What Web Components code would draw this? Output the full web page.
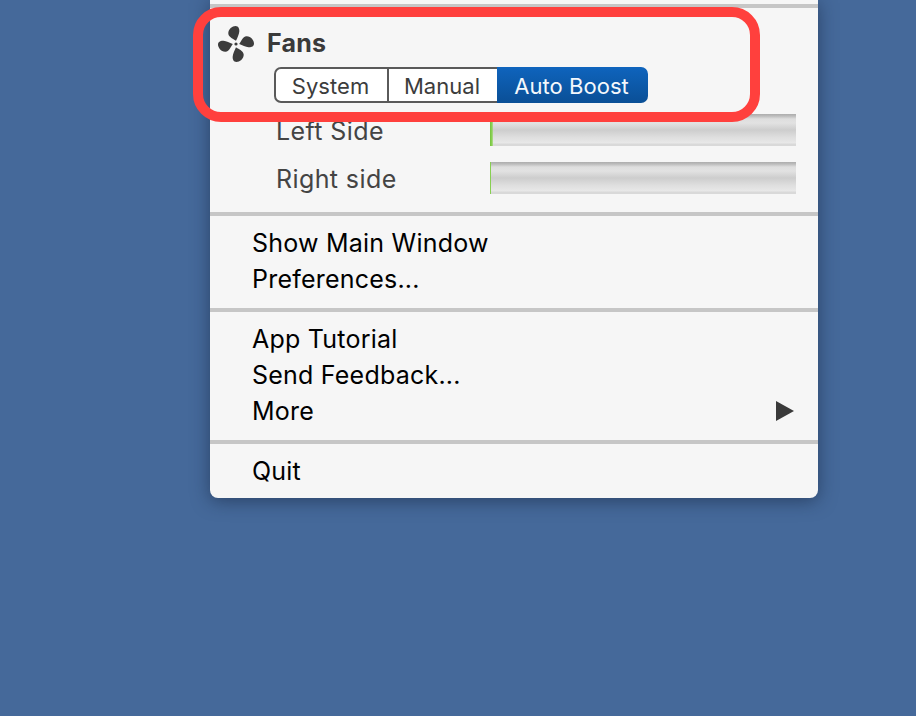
<!DOCTYPE html>
<html>
<head>
<meta charset="utf-8">
<title>Fans</title>
<style>
    html, body { margin: 0; height: 100%; }
    body {
        background: #45699a;
        font-family: Inter, "Liberation Sans", sans-serif;
        overflow: hidden;
    }
</style>
</head>
<body>
<fan-menu>
    <menu-sep></menu-sep>
    <fan-section>
        <fan-row label="Left Side" level="3"></fan-row>
        <fan-row label="Right side" level="1"></fan-row>
    </fan-section>
    <menu-sep></menu-sep>
    <menu-group>
        <menu-item>Show Main Window</menu-item>
        <menu-item>Preferences...</menu-item>
    </menu-group>
    <menu-sep></menu-sep>
    <menu-group>
        <menu-item>App Tutorial</menu-item>
        <menu-item>Send Feedback...</menu-item>
        <menu-item submenu>More</menu-item>
    </menu-group>
    <menu-sep></menu-sep>
    <menu-group last>
        <menu-item>Quit</menu-item>
    </menu-group>
</fan-menu>
<call-out></call-out>

<script>
class FanMenu extends HTMLElement {
    constructor() {
        super();
        this.attachShadow({ mode: 'open' });
        this.shadowRoot.innerHTML = `
            <style>
                :host {
                    display: block;
                    width: 608px;
                    margin-left: 210px;
                    padding-top: 4px;
                    background: #f6f6f6;
                    border-radius: 0 0 8px 8px;
                    box-shadow: 0 3px 18px rgba(20, 35, 60, 0.55);
                }
            </style>
            <slot></slot>
        `
    }
}

class MenuSep extends HTMLElement {
    constructor() {
        super();
        this.attachShadow({ mode: 'open' });
        this.shadowRoot.innerHTML = `
            <style>
                :host { display: block; height: 4px; background: #c6c6c6; }
            </style>
        `
    }
}

class MenuGroup extends HTMLElement {
    constructor() {
        super();
        this.attachShadow({ mode: 'open' });
        this.shadowRoot.innerHTML = `
            <style>
                :host { display: block; padding: 9px 0 11px; }
                :host([last]) { padding: 9px 0 9px; }
            </style>
            <slot></slot>
        `
    }
}

class MenuItem extends HTMLElement {
    constructor() {
        super();
        this.attachShadow({ mode: 'open' });
        this.shadowRoot.innerHTML = `
            <style>
                :host {
                    display: flex;
                    align-items: center;
                    justify-content: space-between;
                    height: 36px;
                    padding: 0 24px 0 42px;
                    font-size: 25px;
                    letter-spacing: 0.22px;
                    color: #000;
                }
                svg { display: none; }
                :host([submenu]) svg { display: block; }
            </style>
            <span><slot></slot></span>
            <svg width="18" height="20" viewBox="0 0 18 20"><polygon points="0,0 18,10 0,20" fill="#3a3a3a"/></svg>
        `
    }
}

class FanSection extends HTMLElement {
    constructor() {
        super();
        this.attachShadow({ mode: 'open' });
        this.shadowRoot.innerHTML = `
            <style>
                :host { display: block; padding: 20px 0 18px; }
                header {
                    display: flex;
                    align-items: center;
                    gap: 11px;
                    height: 30px;
                    padding-left: 8px;
                    font-size: 25px;
                    font-weight: 700;
                    letter-spacing: 0.25px;
                    color: #3a3a3a;
                }
                svg { display: block; margin-top: 2px; }
                .segments { margin: 9px 0 11px 64px; }
                .rows { display: flex; flex-direction: column; gap: 16px; }
            </style>
            <header>
                <svg width="38" height="38" viewBox="-18 -19 38 38" fill="#3c3c3c">
                    <path id="blade" d="M0-3.2C-2-5-7.5-6.5-7.7-10.5-7.9-15-3.5-18-.5-18 2.5-18 3.6-15 3.3-12.5 3-9.5 1.5-6.5 0-3.2Z"/>
                    <use href="#blade" transform="rotate(90)"/>
                    <use href="#blade" transform="rotate(180)"/>
                    <use href="#blade" transform="rotate(270)"/>
                    <circle r="1.6"/>
                </svg>
                <span>Fans</span>
            </header>
            <div class="segments">
                <segment-control>
                    <seg-button style="width:115px">System</seg-button>
                    <seg-button style="width:108px">Manual</seg-button>
                    <seg-button style="width:151px" active>Auto Boost</seg-button>
                </segment-control>
            </div>
            <div class="rows"><slot></slot></div>
        `
    }
}

class SegmentControl extends HTMLElement {
    constructor() {
        super();
        this.attachShadow({ mode: 'open' });
        this.shadowRoot.innerHTML = `
            <style>
                :host { display: flex; width: fit-content; height: 36px; }
            </style>
            <slot></slot>
        `
    }
}

class SegButton extends HTMLElement {
    constructor() {
        super();
        this.attachShadow({ mode: 'open' });
        this.shadowRoot.innerHTML = `
            <style>
                :host {
                    display: flex;
                    align-items: center;
                    justify-content: center;
                    box-sizing: border-box;
                    padding: 1px 2px 0 0;
                    background: #fff;
                    border: 2px solid #5a5a5a;
                    border-left: 0;
                    font-size: 22px;
                    letter-spacing: 0.05px;
                    color: #3c3c3c;
                }
                :host(:first-child) {
                    border-left: 2px solid #5a5a5a;
                    border-radius: 7px 0 0 7px;
                }
                :host(:nth-child(2)) { border-right: 0; }
                :host([active]) {
                    border: 0;
                    border-radius: 0 7px 7px 0;
                    background: linear-gradient(#0f64bd, #0a4f96);
                    color: #f4f8fc;
                }
            </style>
            <slot></slot>
        `
    }
}

class FanRow extends HTMLElement {
    constructor() {
        super();
        this.attachShadow({ mode: 'open' });
        this.shadowRoot.innerHTML = `
            <style>
                :host {
                    display: flex;
                    align-items: center;
                    height: 32px;
                    padding: 0 22px 0 66px;
                    font-size: 25px;
                    letter-spacing: 0.4px;
                    color: #444;
                }
                .label { width: 214px; position: relative; top: 1px; }
                .bar {
                    flex: 1;
                    height: 32px;
                    box-sizing: border-box;
                    display: flex;
                    background: linear-gradient(#adadad 0, #bcbcbc 2px, #dedede 5px, #e2e2e2 9px, #cdcdcd 16px, #dedede 23px, #e8e8e8 29px, #d9d9d9 30px, #d9d9d9 32px);
                }
                .fill {
                    width: 100%;
                    background: linear-gradient(90deg, #74c23c, #8fd45a 70%, rgba(143, 212, 90, 0.4));
                }
            </style>
            <span class="label"></span>
            <div class="bar"><div class="fill"></div></div>
        `
    }

    connectedCallback() {
        this.shadowRoot.querySelector('.label').textContent = this.getAttribute('label');
        this.shadowRoot.querySelector('.fill').style.width = this.getAttribute('level') + 'px';
    }
}

class CallOut extends HTMLElement {
    constructor() {
        super();
        this.attachShadow({ mode: 'open' });
        this.shadowRoot.innerHTML = `
            <style>
                :host {
                    position: absolute;
                    left: 193px;
                    top: 7px;
                    width: 567px;
                    height: 115px;
                    box-sizing: border-box;
                    border: 10px solid #ff403d;
                    border-radius: 28px;
                }
            </style>
        `
    }
}

customElements.define('fan-menu', FanMenu);
customElements.define('menu-sep', MenuSep);
customElements.define('menu-group', MenuGroup);
customElements.define('menu-item', MenuItem);
customElements.define('fan-section', FanSection);
customElements.define('segment-control', SegmentControl);
customElements.define('seg-button', SegButton);
customElements.define('fan-row', FanRow);
customElements.define('call-out', CallOut);
</script>
</body>
</html>
